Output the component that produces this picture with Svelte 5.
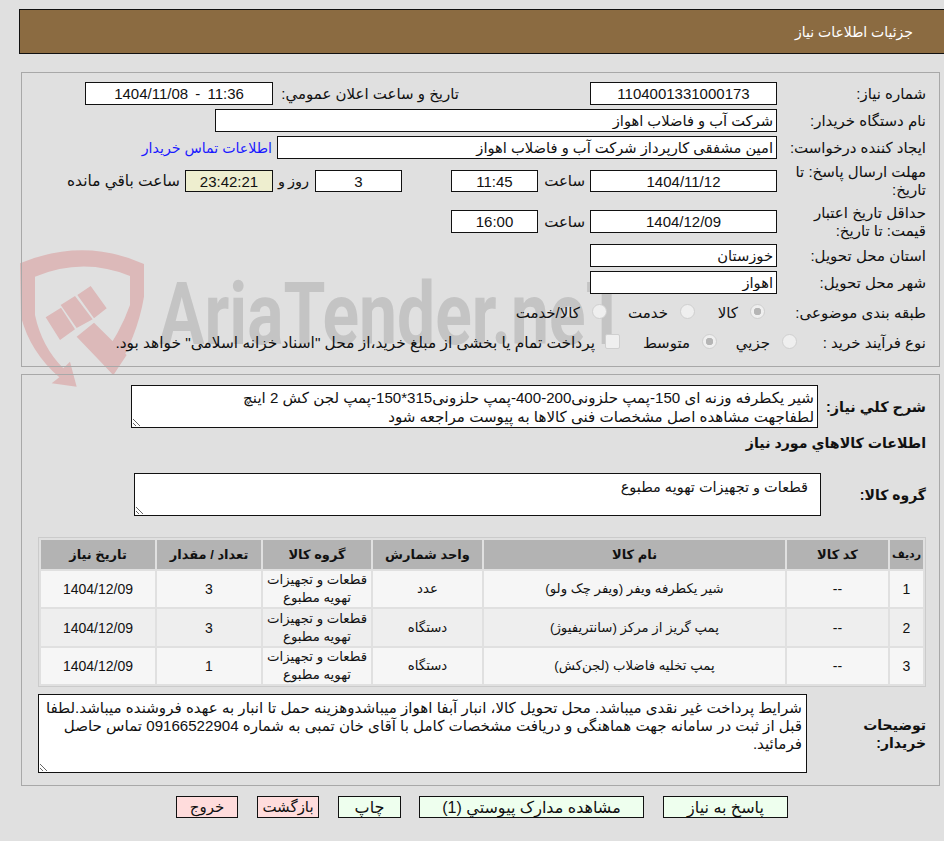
<script>
  const items = [
    { id: 1, code: "--", name: "شیر یکطرفه ویفر (ویفر چک ولو)", unit: "عدد", group: "قطعات و تجهیزات تهویه مطبوع", qty: 3, date: "1404/12/09" },
    { id: 2, code: "--", name: "پمپ گریز از مرکز (سانتریفیوژ)", unit: "دستگاه", group: "قطعات و تجهیزات تهویه مطبوع", qty: 3, date: "1404/12/09" },
    { id: 3, code: "--", name: "پمپ تخلیه فاضلاب (لجن‌کش)", unit: "دستگاه", group: "قطعات و تجهیزات تهویه مطبوع", qty: 1, date: "1404/12/09" }
  ]
</script>

<div class="page" dir="rtl">
  <header class="title"><span>جزئیات اطلاعات نیاز</span></header>

  <div class="watermark" dir="ltr" aria-hidden="true">
    <svg class="shield" viewBox="0 0 375 450" width="125" height="150">
      <path d="M0 70 Q190 -10 372 72 L372 170 Q352 290 280 405 L240 360 Q300 280 330 195 L330 108 Q190 50 45 110 L45 225 Q65 320 130 385 L150 365 L170 440 L95 430 L118 412 Q30 335 3 230 Z" fill="#dcb9b9" />
      <path d="M77 232 L123 203 L165 268 L120 300 Z M122 195 L165 168 L218 238 L170 264 Z M172 165 L212 138 L260 205 L222 235 Z M170 290 L222 248 L320 345 L280 405 Z" fill="#dcb9b9" />
    </svg>
    <span class="wm-text">AriaTender.neT</span>
  </div>

  <section class="panel top">
    <div class="row">
      <span class="lbl">شماره نیاز:</span>
      <input class="field center w187" readonly value="1104001331000173" />
      <span class="lbl2 pub">تاریخ و ساعت اعلان عمومي:</span>
      <input class="field center w188 pubdate" dir="ltr" readonly value="1404/11/08 - 11:36" />
    </div>
    <div class="row">
      <span class="lbl">نام دستگاه خریدار:</span>
      <input class="field wbuyer" readonly value="شرکت آب و فاضلاب اهواز" />
    </div>
    <div class="row">
      <span class="lbl">ایجاد کننده درخواست:</span>
      <input class="field wcreator" readonly value="امین مشفقی کارپرداز شرکت آب و فاضلاب اهواز" />
      <a class="contact" href="#top">اطلاعات تماس خریدار</a>
    </div>
    <div class="row tall r-send">
      <span class="lbl">مهلت ارسال پاسخ: تا تاریخ:</span>
      <input class="field center w187 short" readonly value="1404/11/12" />
      <span class="lbl2 hour">ساعت</span>
      <input class="field center w87 short" readonly value="11:45" />
      <span class="gap49"></span>
      <input class="field center w87 short" readonly value="3" />
      <span class="lbl2 day">روز و</span>
      <input class="field center w88 short clock" readonly value="23:42:21" />
      <span class="lbl2 rest">ساعت باقي مانده</span>
    </div>
    <div class="row tall r-valid">
      <span class="lbl">حداقل تاریخ اعتبار قیمت: تا تاریخ:</span>
      <input class="field center w187" readonly value="1404/12/09" />
      <span class="lbl2 hour">ساعت</span>
      <input class="field center w87" readonly value="16:00" />
    </div>
    <div class="row">
      <span class="lbl">استان محل تحویل:</span>
      <input class="field w187" readonly value="خوزستان" />
    </div>
    <div class="row">
      <span class="lbl">شهر محل تحویل:</span>
      <input class="field w187" readonly value="اهواز" />
    </div>
    <div class="row r-radio cat">
      <span class="lbl">طبقه بندی موضوعی:</span>
      <span class="opt o1"><i class="radio on"></i><span>کالا</span></span>
      <span class="opt o2"><i class="radio"></i><span>خدمت</span></span>
      <span class="opt o3"><i class="radio"></i><span>کالا/خدمت</span></span>
    </div>
    <div class="row r-radio proc">
      <span class="lbl">نوع فرآیند خرید :</span>
      <span class="opt p1"><i class="radio"></i><span>جزیي</span></span>
      <span class="opt p2"><i class="radio on"></i><span>متوسط</span></span>
      <span class="opt p3"><i class="check"></i><span>پرداخت تمام یا بخشی از مبلغ خرید،از محل "اسناد خزانه اسلامی" خواهد بود.</span></span>
    </div>
  </section>

  <section class="panel bottom">
    <div class="desc-row">
      <strong class="blbl">شرح کلي نیاز:</strong>
      <textarea class="area a-desc" readonly>شیر یکطرفه وزنه ای 150-پمپ حلزونی200-400-پمپ حلزونی315*150-پمپ لجن کش 2 اینچ
لطفاجهت مشاهده اصل مشخصات فنی کالاها به پیوست مراجعه شود</textarea>
    </div>
    <h3 class="goods">اطلاعات کالاهاي مورد نیاز</h3>
    <div class="group-row">
      <strong class="blbl">گروه کالا:</strong>
      <textarea class="area a-group" readonly>قطعات و تجهیزات تهویه مطبوع</textarea>
    </div>

    <table>
      <thead>
        <tr>
          <th class="c1">ردیف</th>
          <th class="c2">کد کالا</th>
          <th class="c3">نام کالا</th>
          <th class="c4">واحد شمارش</th>
          <th class="c5">گروه کالا</th>
          <th class="c6">تعداد / مقدار</th>
          <th class="c7">تاریخ نیاز</th>
        </tr>
      </thead>
      <tbody>
        {#each items as item, i}
          <tr class:alt={i % 2 === 1}>
            <td class="num">{item.id}</td>
            <td class="num">{item.code}</td>
            <td>{item.name}</td>
            <td>{item.unit}</td>
            <td>{item.group}</td>
            <td class="num">{item.qty}</td>
            <td class="num">{item.date}</td>
          </tr>
        {/each}
      </tbody>
    </table>

    <div class="note-row">
      <strong class="blbl nlbl">توضیحات خریدار:</strong>
      <textarea class="area a-note" readonly>شرایط پرداخت غیر نقدی میباشد. محل تحویل کالا، انبار آبفا اهواز میباشدوهزینه حمل تا انبار به عهده فروشنده میباشد.لطفا قبل از ثبت در سامانه جهت هماهنگی و دریافت مشخصات کامل با آقای خان تمبی به شماره 09166522904 تماس حاصل فرمائید.</textarea>
    </div>
  </section>

  <div class="actions">
    <button class="green b-reply">پاسخ به نیاز</button>
    <button class="green b-docs">مشاهده مدارک پیوستي (1)</button>
    <button class="green b-print">چاپ</button>
    <button class="red b-back">بازگشت</button>
    <button class="red b-exit">خروج</button>
  </div>
</div>

<style>
  :global(body) {
    background: #e0e0e0;
    overflow: hidden;
  }

  .page {
    position: relative;
    width: 944px;
    height: 841px;
    overflow: hidden;
    padding-top: 9px;
    box-sizing: border-box;
    font-family: "Liberation Sans", "DejaVu Sans", sans-serif;
    font-size: 15px;
    color: #111;
  }

  .title {
    display: flex;
    align-items: center;
    height: 43px;
    margin-left: 19px;
    padding-right: 31px;
    background: #8b6b41;
    border: 1px solid #111;
    border-right: 0;
    color: #fff;
    font-size: 14px;
  }

  .watermark {
    position: absolute;
    left: 20px;
    top: 240px;
    display: flex;
    pointer-events: none;
  }

  .wm-text {
    margin: 30px 0 0 14px;
    font-family: "Roboto", sans-serif;
    font-size: 88px;
    font-weight: 700;
    line-height: 1;
    color: #c4c4c4;
    transform: scaleX(0.77);
    transform-origin: left top;
    white-space: nowrap;
  }

  .panel {
    position: relative;
    box-sizing: border-box;
    margin-right: 4px;
    width: 919px;
    border: 1px solid #a8a8a8;
  }

  .top {
    height: 295px;
    margin-top: 18px;
    padding: 9px 13px 0 0;
  }

  .bottom {
    height: 412px;
    margin-top: 7px;
    padding: 10px 13px 0 0;
  }

  .row {
    display: flex;
    align-items: center;
    height: 23px;
    margin-bottom: 4px;
  }

  .lbl {
    flex: 0 0 149px;
    box-sizing: border-box;
    padding-left: 4px;
    line-height: 18px;
  }

  .lbl2 {
    white-space: nowrap;
  }

  .field {
    box-sizing: border-box;
    height: 23px;
    padding: 0 3px;
    border: 1px solid #111;
    background: #fff;
    font: inherit;
    font-size: 14.7px;
    color: #111;
    outline: none;
  }

  .center {
    text-align: center;
    font-size: 15px;
  }

  .pubdate {
    word-spacing: 3px;
  }

  .short {
    height: 22px;
  }

  .w187 {
    width: 187px;
  }

  .w188 {
    width: 188px;
  }

  .w88 {
    width: 88px;
  }

  .w87 {
    width: 87px;
  }

  .wbuyer {
    width: 562px;
  }

  .wcreator {
    width: 500px;
  }

  .clock {
    background: #eeeecf;
  }

  .pub {
    flex: 0 0 186px;
    margin-right: 131px;
  }

  .contact {
    margin-right: 5px;
    color: #1a1aff;
    font-size: 14.2px;
    text-decoration: none;
    white-space: nowrap;
  }

  .tall {
    height: 34px;
    margin-bottom: 0;
  }

  .r-send {
    margin-top: 5px;
    margin-bottom: 6px;
  }

  .r-valid {
    height: 35px;
    margin-bottom: 5px;
  }

  .hour {
    flex: 0 0 52px;
    box-sizing: border-box;
    padding-right: 5px;
  }

  .gap49 {
    flex: 0 0 49px;
  }

  .day {
    flex: 0 0 42px;
    box-sizing: border-box;
    padding-right: 6px;
    font-size: 14.5px;
    word-spacing: -1px;
  }

  .rest {
    margin-right: 5px;
    font-size: 15.4px;
  }

  .r-radio {
    height: 20px;
    margin-bottom: 0;
  }

  .cat {
    margin-top: 9px;
    margin-bottom: 10px;
  }

  .opt {
    display: flex;
    align-items: center;
    gap: 12px;
    box-sizing: border-box;
    white-space: nowrap;
  }

  .o1 { width: 70px; margin-right: 12px; }
  .o2 { width: 88px; }
  .p1 { width: 80px; margin-right: -20px; }
  .p2 { width: 97px; }
  .p3 { gap: 10px; font-size: 15.4px; }

  .radio {
    flex: none;
    width: 15px;
    height: 15px;
    margin-bottom: 4px;
    box-sizing: border-box;
    border: 1px solid #cfcfcf;
    border-radius: 50%;
    background: #efefef;
  }

  .radio.on {
    background: radial-gradient(circle, #b5b5b5 0 3.5px, #efefef 4px);
  }

  .check {
    flex: none;
    width: 15px;
    height: 15px;
    margin-bottom: 4px;
    box-sizing: border-box;
    border: 1px solid #cfcfcf;
    border-radius: 2px;
    background: #efefef;
  }

  .blbl {
    font-size: 14px;
    white-space: nowrap;
  }

  .desc-row {
    display: flex;
    align-items: center;
    height: 43px;
  }

  .desc-row .blbl {
    flex: 0 0 108px;
    font-size: 14.4px;
  }

  .area {
    display: block;
    box-sizing: border-box;
    padding: 0 3px;
    border: 1px solid #111;
    background: #fff;
    font: inherit;
    font-size: 15.1px;
    line-height: 18px;
    color: #111;
    outline: none;
    resize: both;
    overflow: hidden;
  }

  .a-desc {
    width: 687px;
    height: 43px;
    padding-top: 3px;
    line-height: 18.5px;
  }

  .goods {
    height: 24px;
    margin: 3px 0 0;
    font-size: 14.2px;
    line-height: 24px;
  }

  .group-row {
    display: flex;
    align-items: center;
    height: 43px;
    margin-top: 18px;
  }

  .group-row .blbl {
    flex: 0 0 105px;
  }

  .a-group {
    width: 687px;
    height: 43px;
    padding: 4px 12px 0;
    font-size: 14.5px;
  }

  table {
    box-sizing: border-box;
    width: 888px;
    margin-top: 21px;
    margin-bottom: 7px;
    border: 1px solid #cbcbcb;
    border-spacing: 2px;
    table-layout: fixed;
    font-size: 13.3px;
  }

  th {
    height: 29px;
    padding: 0;
    background: #b3b3b3;
    font-size: 13px;
    font-weight: 700;
  }

  th.c1 {
    font-size: 11px;
  }

  td {
    height: 36px;
    padding: 0;
    background: #f6f6f6;
    text-align: center;
    line-height: 18px;
  }

  td.num {
    font-size: 14px;
  }

  .alt td {
    height: 37px;
    background: #eeeeee;
  }

  .c1 { width: 33px; }
  .c2 { width: 101px; }
  .c3 { width: 301px; }
  .c4 { width: 109px; }
  .c5 { width: 108px; }
  .c6 { width: 104px; }
  .c7 { width: 114px; }

  .note-row {
    display: flex;
    align-items: center;
  }

  .nlbl {
    flex: 0 0 119px;
    box-sizing: border-box;
    padding-left: 50px;
    white-space: normal;
    line-height: 18px;
  }

  .a-note {
    width: 769px;
    height: 79px;
    padding: 4px 4px 0 6px;
  }

  .actions {
    display: flex;
    gap: 19px;
    margin: 10px 156px 0 0;
  }

  button {
    box-sizing: border-box;
    height: 22px;
    padding: 0;
    border: 1px solid #111;
    font: inherit;
    font-size: 15px;
    color: #111;
  }

  .green { background: #eeffee; font-size: 16px; }
  .red { background: #ffdcdc; }
  .b-reply { width: 125px; }
  .b-docs { width: 225px; }
  .b-print { width: 63px; margin-right: -1px; }
  .b-back { width: 62px; }
  .b-exit { width: 62px; }
</style>
